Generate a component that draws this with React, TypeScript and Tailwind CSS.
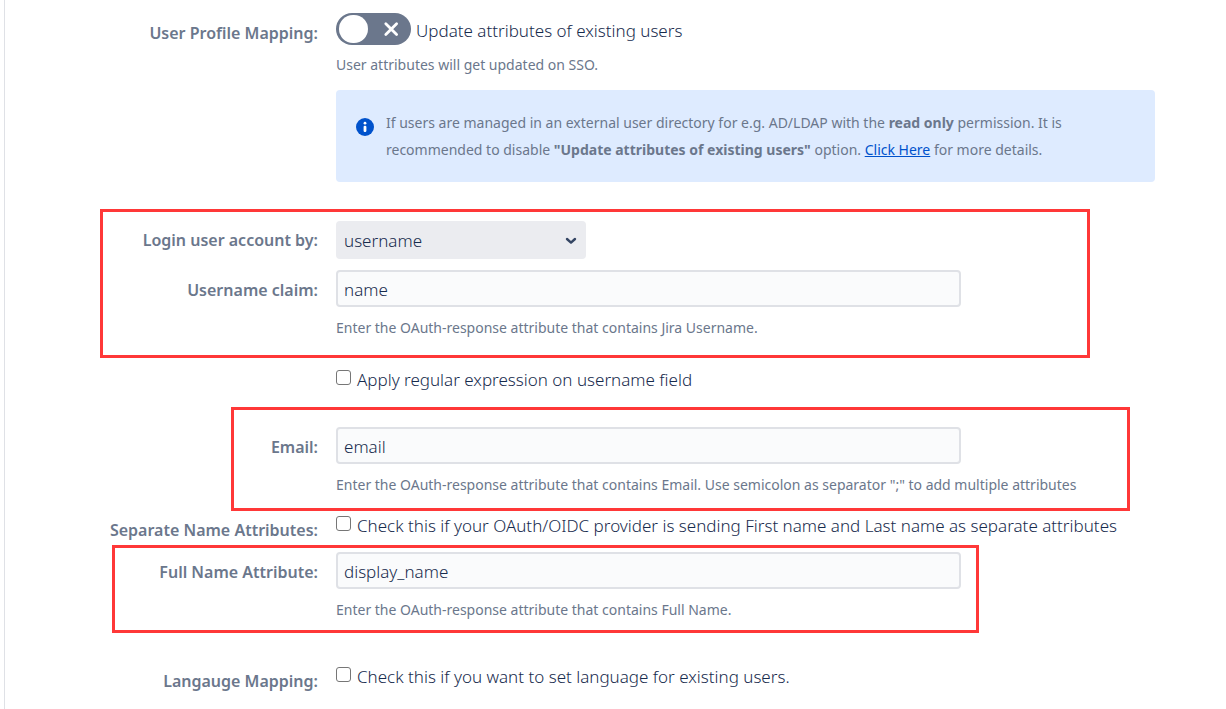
import { useState, type ReactNode } from "react";

type RowProps = {
  label?: string;
  htmlFor?: string;
  className?: string;
  labelClassName?: string;
  children: ReactNode;
};

function Row({ label, htmlFor, className = "", labelClassName = "", children }: RowProps) {
  return (
    <div className={`flex items-start gap-[18px] ${className}`}>
      <div className="w-[313px] shrink-0 text-right">
        {label && (
          <label
            htmlFor={htmlFor}
            className={`block text-base leading-6 font-semibold text-[#6b778c] ${labelClassName}`}
          >
            {label}
          </label>
        )}
      </div>
      <div className="min-w-0 flex-1">{children}</div>
    </div>
  );
}

function Highlight({ className }: { className: string }) {
  return (
    <div
      aria-hidden="true"
      className={`pointer-events-none absolute border-3 border-[#ff3838] ${className}`}
    />
  );
}

function Hint({ children }: { children: ReactNode }) {
  return <p className="text-sm leading-5 text-[#6b778c]">{children}</p>;
}

type FieldProps = {
  id: string;
  label: string;
  value: string;
  hint: string;
  className?: string;
};

function TextField({ id, label, value, hint, className = "" }: FieldProps) {
  return (
    <Row label={label} htmlFor={id} className={className} labelClassName="mt-2">
      <input
        id={id}
        type="text"
        defaultValue={value}
        className="mb-[11px] block h-[37px] w-full max-w-[625px] rounded border-2 border-[#dfe1e6] bg-[#fafbfc] px-1.5 pt-0.5 text-[17px] font-light text-[#172b4d] outline-none"
      />
      <Hint>{hint}</Hint>
    </Row>
  );
}

function CheckField({ id, children }: { id: string; children: ReactNode }) {
  return (
    <div className="flex items-start gap-1.5">
      <input
        id={id}
        type="checkbox"
        className="mt-0.5 size-[15px] shrink-0 appearance-none rounded-[3px] border border-[#767676] bg-white checked:bg-[#0052cc]"
      />
      <label htmlFor={id} className="text-[17px] leading-6 font-light text-[#172b4d]">
        {children}
      </label>
    </div>
  );
}

function Toggle() {
  const [on, setOn] = useState(false);
  return (
    <button
      id="update-attributes"
      type="button"
      role="switch"
      aria-checked={on}
      aria-label="Update attributes of existing users"
      onClick={() => setOn(!on)}
      className={`flex h-8 w-[75px] shrink-0 items-center justify-between rounded-full pr-3 pl-[3px] ${
        on ? "flex-row-reverse bg-[#00875a]" : "bg-[#6b778c]"
      }`}
    >
      <span className="h-7 w-[29px] rounded-full bg-white" />
      <svg viewBox="0 0 16 16" className="size-4" fill="none" stroke="#fff" strokeWidth="2.8" strokeLinecap="round">
        {on ? <path d="M2.5 8.5l4 4 7-9" /> : <path d="M2.8 2.8l10.8 10.8M13.6 2.8l-10.8 10.8" />}
      </svg>
    </button>
  );
}

export default function App() {
  return (
    <main className="ml-1 min-h-screen border-l border-[#dfe1e6] bg-white pt-[13px] pr-[71px] font-['Noto_Sans',sans-serif]">
      <Row label="User Profile Mapping:" htmlFor="update-attributes" labelClassName="mt-2">
        <div className="mb-2.5 flex items-center gap-[5px]">
          <Toggle />
          <span className="pt-1 text-[17px] leading-6 font-light text-[#172b4d]">
            Update attributes of existing users
          </span>
        </div>
        <Hint>User attributes will get updated on SSO.</Hint>
        <div className="mt-[15px] flex items-start gap-3 rounded bg-[#deebff] px-5 py-[19px]">
          <svg viewBox="0 0 18 18" className="mt-[9px] size-[18px] shrink-0">
            <circle cx="9" cy="9" r="9" fill="#0052cc" />
            <circle cx="9" cy="5.2" r="1.4" fill="#fff" />
            <rect x="7.6" y="7.7" width="2.8" height="6.3" rx="1.2" fill="#fff" />
          </svg>
          <p className="max-w-[700px] text-sm leading-[27px] text-[#6b778c]">
            If users are managed in an external user directory for e.g. AD/LDAP with the{" "}
            <strong>read only</strong> permission. It is recommended to disable{" "}
            <strong>"Update attributes of existing users"</strong> option.{" "}
            <a href="#details" className="text-[#0052cc] underline">
              Click Here
            </a>{" "}
            for more details.
          </p>
        </div>
      </Row>

      <section className="relative mt-[39px]">
        <Row label="Login user account by:" htmlFor="login-by" labelClassName="mt-[7px]">
          <div className="relative w-[250px]">
            <select
              id="login-by"
              defaultValue="username"
              className="block h-[38px] w-full appearance-none rounded bg-[#ebecf0] px-2 pt-0.5 text-[17px] font-light text-[#172b4d] outline-none"
            >
              <option value="username">username</option>
              <option value="email">email</option>
            </select>
            <svg
              viewBox="0 0 12 8"
              className="pointer-events-none absolute top-4 right-[9px] h-2 w-3"
              fill="none"
              stroke="#344563"
              strokeWidth="2.4"
              strokeLinecap="round"
              strokeLinejoin="round"
            >
              <path d="M2 2l4 3.6L10 2" />
            </svg>
          </div>
        </Row>
        <TextField
          id="username-claim"
          label="Username claim:"
          value="name"
          hint="Enter the OAuth-response attribute that contains Jira Username."
          className="mt-[11px]"
        />
        <Highlight className="-top-3 right-[65px] -bottom-5 left-[95px]" />
      </section>

      <Row className="mt-[30px]">
        <CheckField id="regex">Apply regular expression on username field</CheckField>
      </Row>

      <section className="relative mt-[35px]">
        <TextField
          id="email"
          label="Email:"
          value="email"
          hint={'Enter the OAuth-response attribute that contains Email. Use semicolon as separator ";" to add multiple attributes'}
        />
        <Highlight className="-top-5 right-[25px] -bottom-4 left-[226px]" />
      </section>

      <Row label="Separate Name Attributes:" htmlFor="separate-names" className="mt-[19px]" labelClassName="mt-1">
        <CheckField id="separate-names">
          Check this if your OAuth/OIDC provider is sending First name and Last name as separate attributes
        </CheckField>
      </Row>

      <section className="relative mt-2.5">
        <TextField
          id="full-name"
          label="Full Name Attribute:"
          value="display_name"
          hint="Enter the OAuth-response attribute that contains Full Name."
        />
        <Highlight className="-top-[7px] right-[176px] -bottom-[13px] left-[107px]" />
      </section>

      <Row label="Langauge Mapping:" htmlFor="language" className="mt-[45px]" labelClassName="mt-1">
        <CheckField id="language">Check this if you want to set language for existing users.</CheckField>
      </Row>
    </main>
  );
}
